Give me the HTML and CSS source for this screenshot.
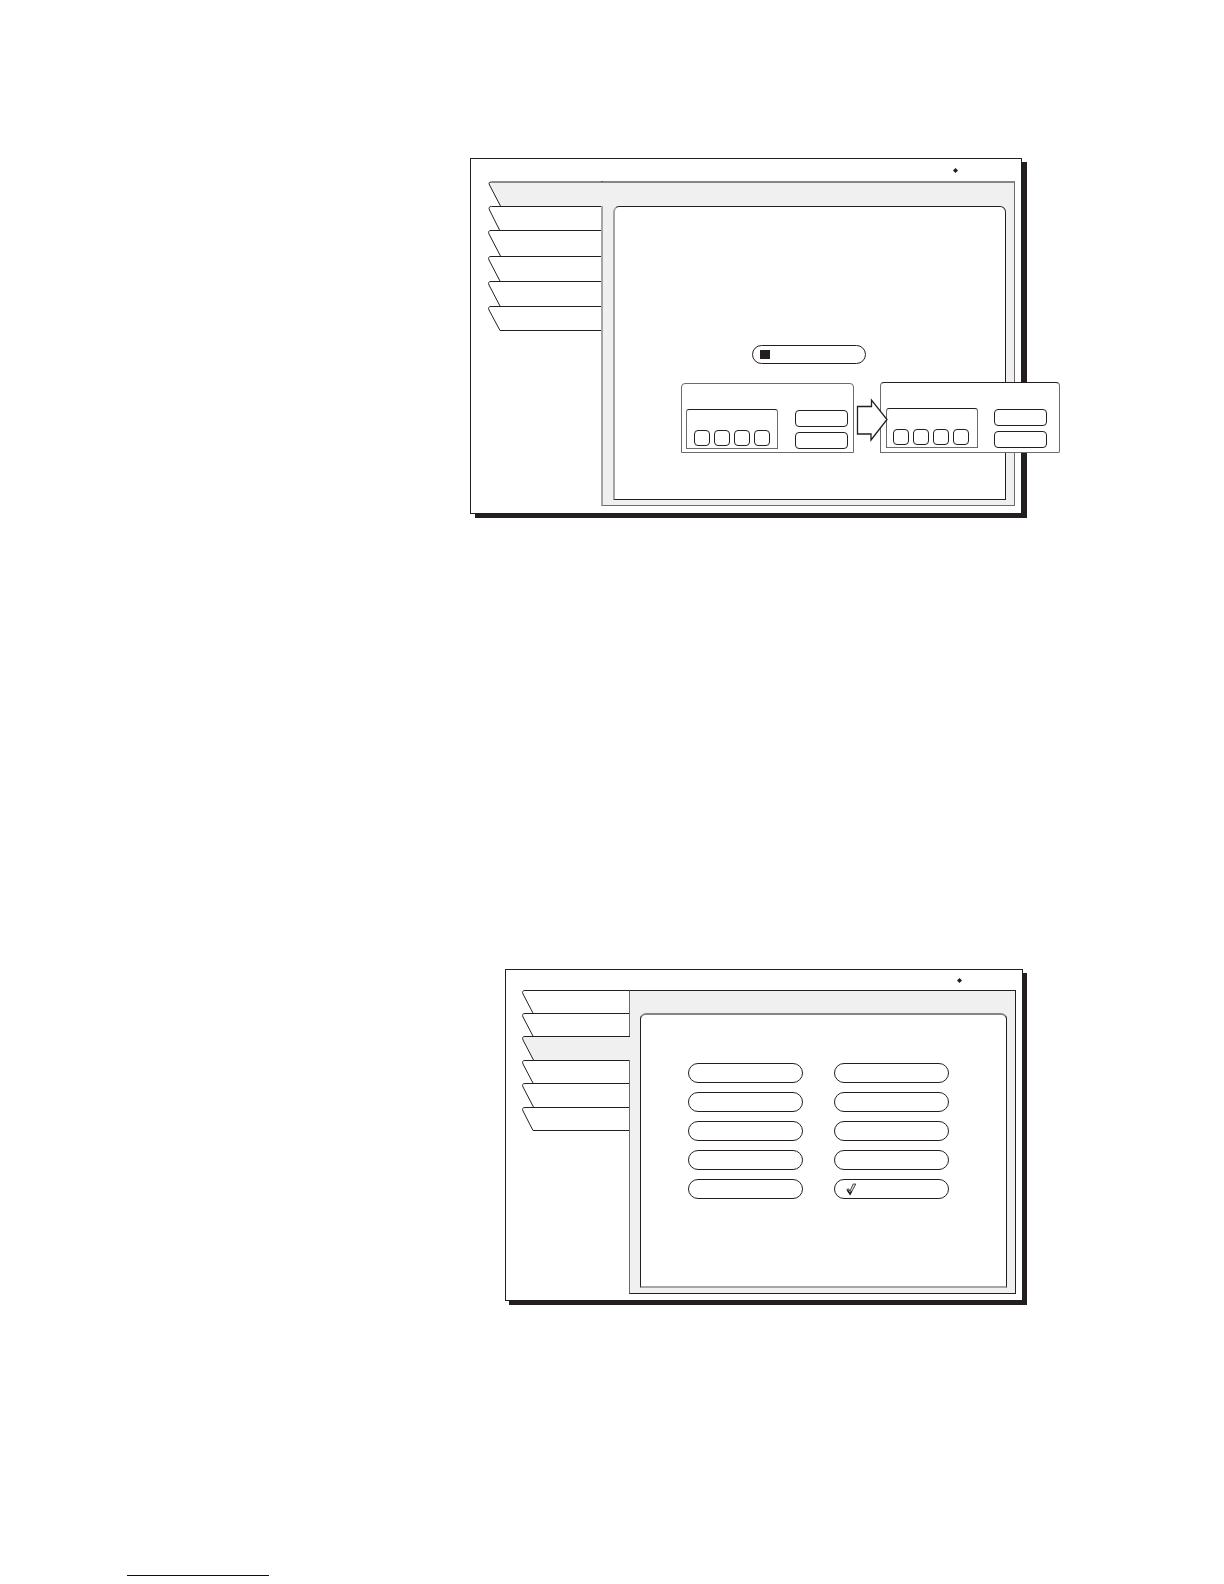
FILE: index.html
```html
<!DOCTYPE html>
<html lang="en">
<head>
<meta charset="utf-8">
<title>Screens</title>
<link rel="stylesheet" href="styles.css">
</head>
<body>
<main class="page">
  <section class="screen screen-a">
    <header class="status"><svg class="diamond" viewBox="0 0 5 5"><path d="M2.5 0L5 2.500L2.500 5L0 2.500Z"/></svg></header>
    <div class="body">
      <nav class="tabs">
        <button class="tab active" aria-label="Tab 1"><svg><path d="M400 1H3.500Q0 1 1.500 4L13 26H400"/></svg></button>
        <button class="tab" aria-label="Tab 2"><svg><path d="M400 .5H3.500Q0 .5 1.500 4L13 27H400"/></svg></button>
        <button class="tab" aria-label="Tab 3"><svg><path d="M400 .5H3Q-.5 .5 1 4L13 27H400"/></svg></button>
        <button class="tab" aria-label="Tab 4"><svg><path d="M400 .5H3Q-.5 .5 1 4L13 27H400"/></svg></button>
        <button class="tab" aria-label="Tab 5"><svg><path d="M400 .5H3Q-.5 .5 1 4L13 27H400"/></svg></button>
        <button class="tab" aria-label="Tab 6"><svg><path d="M400 .5H3Q-.5 .5 1 4L12 24.500H400"/></svg></button>
      </nav>
      <div class="panel">
        <div class="sheet">
          <button class="pill stop" aria-label="Stop"><span class="square"></span></button>
          <div class="steps">
            <div class="card">
              <div class="group"><span class="cell"></span><span class="cell"></span><span class="cell"></span><span class="cell"></span></div>
              <div class="actions"><button class="action" aria-label="First action"></button><button class="action" aria-label="Second action"></button></div>
            </div>
            <svg class="arrow" viewBox="0 0 33 44"><path d="M1.500 8.500H15.500V2L31 21.500L15 42V36H1.500Z"/></svg>
            <div class="card next">
              <div class="group"><span class="cell"></span><span class="cell"></span><span class="cell"></span><span class="cell"></span></div>
              <div class="actions"><button class="action" aria-label="First action"></button><button class="action" aria-label="Second action"></button></div>
            </div>
          </div>
        </div>
      </div>
    </div>
  </section>

  <section class="screen screen-b">
    <header class="status"><svg class="diamond" viewBox="0 0 5 5"><path d="M2.500 0L5 2.500L2.500 5L0 2.500Z"/></svg></header>
    <div class="body">
      <nav class="tabs">
        <button class="tab" aria-label="Tab 1"><svg><path d="M400 .5H3Q-.5 .5 1 4L12 25H400"/></svg></button>
        <button class="tab" aria-label="Tab 2"><svg><path d="M400 .5H3Q-.5 .5 1 4L12 25H400"/></svg></button>
        <button class="tab active" aria-label="Tab 3"><svg><path d="M400 .5H3Q-.5 .5 1 4L12 25H400"/></svg></button>
        <button class="tab" aria-label="Tab 4"><svg><path d="M400 .5H3Q-.5 .5 1 4L12 25H400"/></svg></button>
        <button class="tab" aria-label="Tab 5"><svg><path d="M400 .5H3Q-.5 .5 1 4L12 25H400"/></svg></button>
        <button class="tab" aria-label="Tab 6"><svg><path d="M400 .5H3Q-.5 .5 1 4L11 23.500H400"/></svg></button>
      </nav>
      <div class="panel">
        <div class="sheet options">
          <button class="pill" aria-label="Option 1"></button>
          <button class="pill" aria-label="Option 6"></button>
          <button class="pill" aria-label="Option 2"></button>
          <button class="pill" aria-label="Option 7"></button>
          <button class="pill" aria-label="Option 3"></button>
          <button class="pill" aria-label="Option 8"></button>
          <button class="pill" aria-label="Option 4"></button>
          <button class="pill" aria-label="Option 9"></button>
          <button class="pill" aria-label="Option 5"></button>
          <button class="pill chosen" aria-label="Option 10" aria-pressed="true"><svg class="check" viewBox="0 0 11 13"><path d="M.8 6.500L2.600 5.800L4 8L7.200 1H9.800L4.200 11.500Z"/><path class="heavy" d="M1.500 7L4 11L5.500 8"/></svg></button>
        </div>
      </div>
    </div>
  </section>
</main>
<footer class="footer"><a class="footer-link" href="#top" aria-label="Back to top"></a></footer>
</body>
</html>
```
FILE: styles.css
```css
:root {
  --ink: #231f20;
  --mid: #6c6a6b;
  --soft: #a6a6a6;
  --fill: #f0f0f0;
}

* { box-sizing: border-box; }

body {
  margin: 0;
  min-height: 100vh;
  display: flex;
  flex-direction: column;
  justify-content: space-between;
  background: #fff;
  font-family: "Liberation Sans", Arial, sans-serif;
}

button {
  padding: 0;
  border: 0;
  background: #fff;
}

.page {
  display: flex;
  flex-direction: column;
  gap: 455px;
  padding: 158px 201px 0 470px;
}

.screen {
  border: 1px solid var(--ink);
  background: #fff;
}

.screen-a {
  margin-right: 1px;
  box-shadow: 5px 4px var(--ink);
}

.screen-b {
  margin-left: 35px;
  box-shadow: 4px 4px var(--ink);
}

.status {
  display: flex;
  align-items: center;
  justify-content: flex-end;
  height: 22px;
  padding-right: 63px;
}

.screen-b .status {
  height: 20px;
  padding-right: 60px;
}

.diamond {
  width: 5px;
  height: 5px;
  fill: var(--ink);
}

.body {
  display: grid;
  grid-template-columns: 113px 1fr;
  padding: 0 6px 7px 17px;
}

.screen-b .body {
  grid-template-columns: 107px 1fr;
  padding: 0 6px 6px 16px;
}

/* Slanted tabs: each one covers the lower edge of the tab before it */
.tabs {
  display: grid;
  grid-template-rows: 25px 24px 26px 25px 25px 25px;
  align-content: start;
  position: relative;
}

.screen-b .tabs { grid-template-rows: 23px 23px 24px 23px 24px 24px; }

.tab {
  position: relative;
  min-width: 0;
  background: none;
}

.tab svg {
  display: block;
  width: 100%;
  height: 26px;
  fill: #fff;
  stroke: var(--ink);
}

.screen-b .tab svg { height: 24px; }

.tab.active { margin-right: -2px; }

.screen-b .tab.active { margin-right: -1px; }

.tab.active svg { fill: var(--fill); }

.screen-a .tab.active svg { height: 25px; }

.panel {
  display: grid;
  min-width: 0;
  padding: 23px 8px 5px 10px;
  border: 1px solid var(--mid);
  border-top: 2px solid #878586;
  border-left: 2px solid var(--soft);
  background: var(--fill);
}

.screen-b .panel {
  padding: 22px 8px 5px 10px;
  border: 1px solid var(--ink);
  border-left-color: var(--mid);
}

.sheet {
  display: flex;
  flex-direction: column;
  min-width: 0;
  min-height: 294px;
  padding: 138px 2px 0 0;
  border: 1px solid var(--ink);
  border-left: 2px solid var(--soft);
  border-radius: 6px 6px 0 0;
  background: #fff;
}

.options {
  display: grid;
  grid-template-columns: 115px 115px;
  grid-auto-rows: 20px;
  gap: 9px 31px;
  align-content: start;
  min-height: 275px;
  padding: 48px 0 0 47px;
  border: 1px solid var(--ink);
  border-top: 2px solid #858585;
  border-bottom: 2px solid var(--soft);
}

.pill {
  display: flex;
  align-items: center;
  border: 1px solid var(--ink);
  border-radius: 10px;
}

.stop {
  align-self: center;
  width: 114px;
  height: 19px;
  padding-left: 7px;
}

.square {
  width: 10px;
  height: 9px;
  background: var(--ink);
}

.chosen { padding-left: 11px; }

.check {
  width: 11px;
  height: 13px;
  fill: #ddd;
  stroke: var(--ink);
  stroke-width: .8;
}

.check .heavy {
  fill: none;
  stroke-width: 1.5;
}

.steps {
  display: flex;
  align-items: flex-end;
  margin: 18px 0 0 66px;
}

.card {
  display: flex;
  flex: none;
  align-items: flex-end;
  gap: 17px;
  width: 173px;
  height: 70px;
  padding: 0 4px 3px;
  border: 1px solid var(--mid);
  border-radius: 4px 4px 0 0;
  background: #fff;
}

.next {
  gap: 16px;
  width: 180px;
  height: 71px;
  padding: 0 4px 4px 5px;
  border-top-color: var(--ink);
  border-radius: 4px 4px 2px 0;
}

.group {
  display: flex;
  align-items: flex-end;
  gap: 4px;
  width: 92px;
  height: 40px;
  padding: 0 0 2px 7px;
  border: 1px solid var(--mid);
  border-top-color: var(--ink);
  border-radius: 3px 3px 0 0;
}

.next .group { padding-left: 6px; }

.cell {
  width: 16px;
  height: 16px;
  border: 1px solid var(--ink);
  border-radius: 4px;
}

.actions {
  display: grid;
  gap: 5px;
}

.action {
  width: 53px;
  height: 17px;
  border: 1px solid var(--ink);
  border-radius: 4px;
}

.arrow {
  position: relative;
  flex: none;
  width: 33px;
  height: 44px;
  margin: 0 -9px 11px 2px;
  fill: #fff;
  stroke: var(--ink);
  stroke-width: 1.3;
}

.footer { padding: 0 127px 8px; }

.footer-link {
  display: block;
  width: 142px;
  height: 14px;
  border-bottom: 1px solid #000080;
}
```
